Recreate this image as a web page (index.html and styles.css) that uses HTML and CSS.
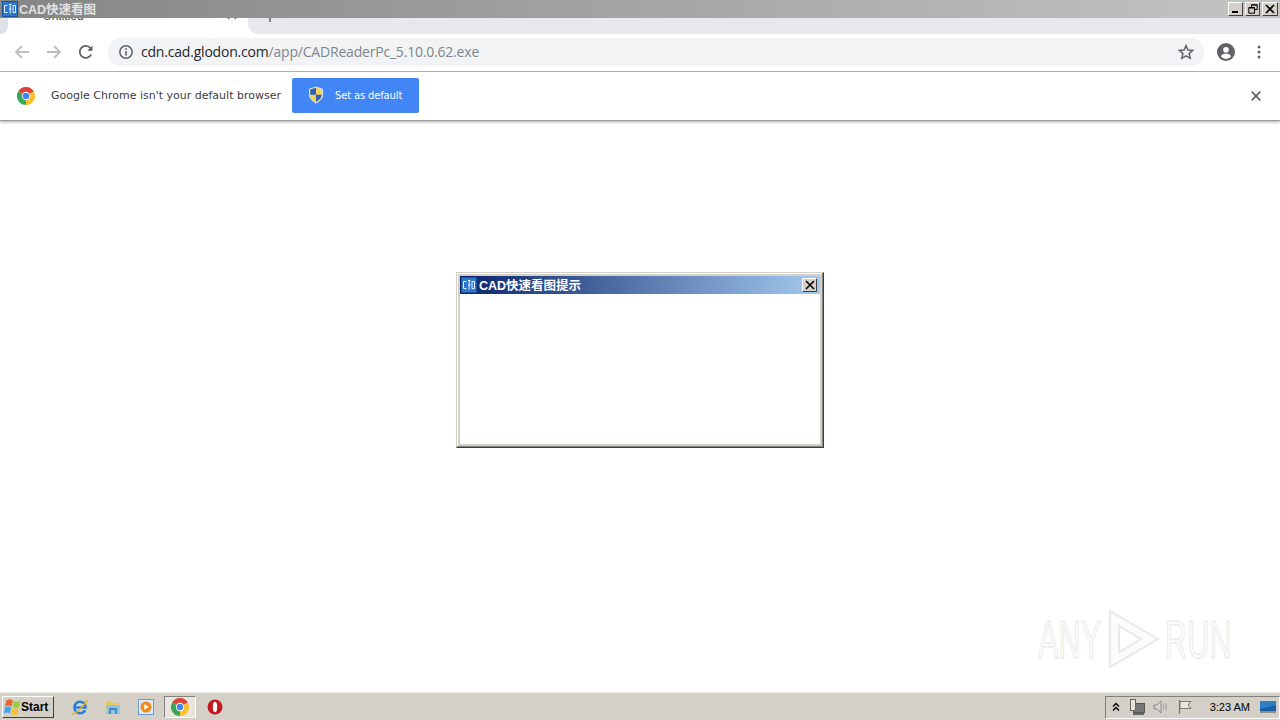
FILE: index.html
```html
<!DOCTYPE html>
<html lang="en">
<head>
    <meta charset="UTF-8">
    <meta name="viewport" content="width=device-width, initial-scale=1.0">
    <title>CAD快速看图</title>
    <link rel="stylesheet" href="styles.css">
</head>
<body>
    <div class="screen">
        <div class="titlebar">
            <div class="app-icon">
                <svg width="16" height="16" viewBox="0 0 16 16"><rect width="16" height="16" fill="#1c4f9c"/><rect x="1" y="1" width="14" height="14" fill="#2f78c8"/><path d="M2.500 4.500h3M2.500 4.500v7h3M7 3.500h2.500M8.200 3.500v9M7 8h2.500M11 4.500h2.500v7H11z" stroke="#e4f1ff" stroke-width="1" fill="none"/></svg>
            </div>
            <span class="titlebar-text">CAD快速看图</span>
            <div class="win-buttons">
                <button class="win-btn"><svg width="10" height="10" viewBox="0 0 10 10"><rect x="1" y="7" width="6" height="2" fill="#000"/></svg></button>
                <button class="win-btn"><svg width="10" height="10" viewBox="0 0 10 10"><path d="M3.500 3V.8h5.700v4.700H7M.8 3.500h5.700v5.700H.8z" fill="none" stroke="#000"/><path d="M3 1h6M1 4h5" stroke="#000"/></svg></button>
                <button class="win-btn"><svg width="10" height="10" viewBox="0 0 10 10"><path d="M1 1l8 8M9 1l-8 8" stroke="#000" stroke-width="1.600"/></svg></button>
            </div>
        </div>

        <div class="tabstrip">
            <div class="strip-left"></div>
            <div class="tab">
                <span class="tab-title">Untitled</span>
                <svg class="tab-close" width="10" height="10" viewBox="0 0 10 10"><path d="M1 1l8 8M9 1l-8 8" stroke="#5f6368" stroke-width="1.400"/></svg>
            </div>
            <div class="strip-right">
                <svg class="new-tab" width="12" height="12" viewBox="0 0 12 12"><path d="M6 0v12M0 6h12" stroke="#5f6368" stroke-width="1.500"/></svg>
            </div>
        </div>

        <div class="toolbar">
            <svg class="nav-icon" width="16" height="16" viewBox="0 0 16 16"><path d="M15 8H2M8 2L2 8l6 6" fill="none" stroke="#bcbec1" stroke-width="1.800"/></svg>
            <svg class="nav-icon" width="16" height="16" viewBox="0 0 16 16"><path d="M1 8h13M8 2l6 6-6 6" fill="none" stroke="#bcbec1" stroke-width="1.800"/></svg>
            <svg class="nav-icon" width="16" height="16" viewBox="0 0 16 16"><path d="M13.200 10.500A6 6 0 1 1 12.400 4" fill="none" stroke="#5f6368" stroke-width="1.800"/><path d="M14.500 1.500v5.200H9.300z" fill="#5f6368"/></svg>
            <div class="omnibox">
                <svg class="info-icon" width="16" height="16" viewBox="0 0 16 16"><circle cx="8" cy="8" r="6.200" fill="none" stroke="#5f6368" stroke-width="1.500"/><path d="M8 7v4.400" stroke="#5f6368" stroke-width="1.600"/><rect x="7.200" y="4.200" width="1.600" height="1.600" fill="#5f6368"/></svg>
                <span class="url"><span class="url-host">cdn.cad.glodon.com</span><span class="url-path">/app/CADReaderPc_5.10.0.62.exe</span></span>
                <svg class="star-icon" width="16" height="16" viewBox="0 0 16 16"><path d="M8 1.600l1.900 4.400 4.800.4-3.600 3.200 1.100 4.700L8 11.800l-4.200 2.500 1.100-4.700-3.600-3.200 4.800-.4z" fill="none" stroke="#5f6368" stroke-width="1.500"/></svg>
            </div>
            <svg class="profile-icon" width="18" height="18" viewBox="0 0 18 18"><circle cx="9" cy="9" r="9" fill="#5f6368"/><circle cx="9" cy="6.800" r="2.800" fill="#fff"/><path d="M3.800 13.200c1.200-2 3.200-2.700 5.200-2.700s4 .7 5.200 2.700A6.600 6.600 0 0 1 9 16a6.600 6.600 0 0 1-5.200-2.800z" fill="#fff"/></svg>
            <svg class="menu-icon" width="4" height="14" viewBox="0 0 4 14"><circle cx="2" cy="2" r="1.500" fill="#5f6368"/><circle cx="2" cy="7" r="1.500" fill="#5f6368"/><circle cx="2" cy="12" r="1.500" fill="#5f6368"/></svg>
        </div>

        <div class="infobar">
            <svg class="chrome-logo" width="18" height="18" viewBox="0 0 18 18">
                <path d="M9 9L1.200 4.500A9 9 0 0 1 16.800 4.500z" fill="#db4437"/>
                <path d="M9 9L16.800 4.500A9 9 0 0 1 9 18z" fill="#fbc02d"/>
                <path d="M9 9L9 18A9 9 0 0 1 1.200 4.500z" fill="#3aa757"/>
                <circle cx="9" cy="9" r="4.200" fill="#fff"/>
                <circle cx="9" cy="9" r="3.300" fill="#4285f4"/>
            </svg>
            <span class="infobar-text">Google Chrome isn't your default browser</span>
            <button class="default-btn">
                <svg width="16" height="18" viewBox="0 0 16 18"><path d="M8 1l6.500 2.200v5.300c0 4-3 6.800-6.500 8.500-3.500-1.700-6.500-4.500-6.500-8.500V3.200z" fill="#f3d25a" stroke="#dfe7f5" stroke-width="1"/><path d="M8 1.800v7H2.200V3.600zM8 8.800h5.800c-.3 3.300-2.900 5.600-5.800 7.200z" fill="#2f62b8"/></svg>
                <span>Set as default</span>
            </button>
            <svg class="infobar-close" width="10" height="10" viewBox="0 0 10 10"><path d="M.7.700l8.600 8.600M9.300.700L.7 9.300" stroke="#5f6368" stroke-width="1.700"/></svg>
        </div>

        <div class="content"></div>

        <div class="taskbar">
            <button class="start-btn">
                <svg width="17" height="18" viewBox="0 0 17 18"><path d="M2.500 2.500C4.500 1 6.500 1 8.800 2.300L7.500 8.500C5.500 7.300 3.500 7.300 1 8.500z" fill="#e8632c"/><path d="M9.800 2.800C12 4 14 4 16.500 2.800L15 9.300C13 10.300 10.800 10.300 8.500 9z" fill="#9ccc3c"/><path d="M.8 9.500C3 8.300 5 8.300 7.200 9.500L6 15.500C4 14.300 2 14.300 0 15.500z" fill="#3fa4e8"/><path d="M8.300 10C10.500 11.200 12.700 11.200 14.800 10.300L13.500 16.300C11.500 17.300 9.300 17.300 7 16z" fill="#fbc02d"/></svg>
                <span>Start</span>
            </button>
            <div class="quick-launch">
                <svg class="tray-app" width="18" height="18" viewBox="0 0 18 18"><path d="M3.500 9.500h11C14.500 6 12.300 3.800 9 3.800S3.500 6 3.500 9.500c0 3.600 2.300 5.700 5.500 5.700 2.500 0 4.200-1 5.100-3" fill="none" stroke="#2b7fd6" stroke-width="2.600"/><path d="M1 16C4 16.500 13 8 16.500 2" fill="none" stroke="#e6b422" stroke-width="1.500"/></svg>
                <svg class="tray-app" width="18" height="18" viewBox="0 0 18 18"><path d="M2 3h6l1 2h7v11H2z" fill="#e8c860"/><rect x="2.500" y="7" width="13" height="9" fill="#8cc4e6"/><path d="M6 16v-5h6v5" fill="none" stroke="#3f86b8" stroke-width="1.800"/></svg>
                <svg class="tray-app" width="18" height="18" viewBox="0 0 18 18"><rect x="1.500" y="1.500" width="15" height="15" fill="#dce9f7" stroke="#6b9bd1"/><circle cx="9" cy="9" r="5.500" fill="#ef8a1d"/><path d="M7.300 6l4.400 3-4.400 3z" fill="#fff"/></svg>
                <button class="task-btn">
                    <svg width="18" height="18" viewBox="0 0 18 18">
                        <path d="M9 9L1.200 4.500A9 9 0 0 1 16.800 4.500z" fill="#db4437"/>
                        <path d="M9 9L16.800 4.500A9 9 0 0 1 9 18z" fill="#fbc02d"/>
                        <path d="M9 9L9 18A9 9 0 0 1 1.200 4.500z" fill="#3aa757"/>
                        <circle cx="9" cy="9" r="4.200" fill="#fff"/>
                        <circle cx="9" cy="9" r="3.300" fill="#4285f4"/>
                    </svg>
                </button>
                <svg class="tray-app" width="16" height="16" viewBox="0 0 16 16"><circle cx="8" cy="8" r="7.500" fill="#c4161c"/><ellipse cx="8" cy="8" rx="2.200" ry="5.200" fill="#fff"/></svg>
            </div>
            <div class="tray">
                <svg class="tray-chevron" width="8" height="10" viewBox="0 0 8 10"><path d="M1 4.500l3-3 3 3M1 8.500l3-3 3 3" fill="none" stroke="#000" stroke-width="1.400"/></svg>
                <svg width="16" height="16" viewBox="0 0 16 16"><rect x="4.500" y="4.500" width="11" height="9" fill="#777" stroke="#555"/><rect x="1.500" y=".5" width="5" height="11" fill="#e6e2d6" stroke="#666"/><path d="M4 15h11" stroke="#666" stroke-width="2"/></svg>
                <svg width="16" height="16" viewBox="0 0 16 16"><path d="M1 6h3l4-4v12l-4-4H1z" fill="#d8d4cb" stroke="#8a8a8a"/><path d="M10 5.500c1 1.500 1 3.500 0 5M12 4c1.800 2.500 1.800 5.500 0 8" fill="none" stroke="#9a9a9a"/></svg>
                <svg width="16" height="16" viewBox="0 0 16 16"><path d="M2.500 1v14" stroke="#777" stroke-width="1.300"/><path d="M3 2.500h11l-3 3.500 3 3.500H3z" fill="#e9e5da" stroke="#777"/></svg>
                <span class="clock">3:23 AM</span>
                <svg class="show-desktop" width="16" height="12" viewBox="0 0 16 12"><rect width="16" height="10" fill="#2e7ec9"/><path d="M0 8l16-4v6H0z" fill="#1b5ea3"/><rect y="10" width="16" height="2" fill="#8e8e8e"/></svg>
            </div>
        </div>

        <div class="dialog">
            <div class="dialog-title">
                <svg width="16" height="16" viewBox="0 0 16 16"><rect width="16" height="16" fill="#1c4f9c"/><rect x="1" y="1" width="14" height="14" fill="#2f78c8"/><path d="M2.500 4.500h3M2.500 4.500v7h3M7 3.500h2.500M8.200 3.500v9M7 8h2.500M11 4.500h2.500v7H11z" stroke="#e4f1ff" stroke-width="1" fill="none"/></svg>
                <span class="dialog-title-text">CAD快速看图提示</span>
                <button class="win-btn dialog-close"><svg width="10" height="10" viewBox="0 0 10 10"><path d="M1 1l8 8M9 1l-8 8" stroke="#000" stroke-width="1.600"/></svg></button>
            </div>
        </div>

        <div class="watermark">
            <span class="wm-word">ANY</span>
            <svg width="56" height="62" viewBox="0 0 56 62"><path d="M4 3l48 28L4 59zM13 18l22 13-22 13z" fill="#fbfbfb" fill-rule="evenodd" stroke="#e9e9e9" stroke-width="2"/></svg>
            <span class="wm-word">RUN</span>
        </div>
    </div>
</body>
</html>
```

FILE: styles.css
```css
* {
    margin: 0;
    padding: 0;
    box-sizing: border-box;
}

html,
body {
    height: 100%;
    overflow: hidden;
}

body {
    font-family: 'Liberation Sans', Arial, sans-serif;
    background: #fff;
}

.screen {
    position: relative;
    display: flex;
    flex-direction: column;
    width: 1280px;
    height: 720px;
}

/* Window title bar */
.titlebar {
    position: relative;
    z-index: 2;
    display: flex;
    align-items: center;
    flex: 0 0 18px;
    height: 18px;
    padding: 0 2px;
    background: linear-gradient(90deg, #858585 0%, #c4c4c4 100%);
}

.app-icon {
    display: flex;
    width: 16px;
}

.titlebar-text {
    margin: -2px 0 0 1px;
    color: #e2e2e2;
    font-family: 'Liberation Sans', 'Noto Sans CJK SC', sans-serif;
    font-size: 12.5px;
    font-weight: bold;
}

.win-buttons {
    display: flex;
    gap: 2px;
    margin-left: auto;
}

.win-btn {
    display: flex;
    align-items: center;
    justify-content: center;
    width: 15px;
    height: 14px;
    border: 1px solid;
    border-color: #fff #404040 #404040 #fff;
    background: #d4d0c8;
}

.win-buttons .win-btn:last-child {
    width: 16px;
}

/* Tabs */
.tabstrip {
    display: flex;
    flex: 0 0 16px;
    background: #fff;
}

.strip-left {
    flex: 0 0 8px;
    background: #dee1e6;
    border-bottom-right-radius: 8px;
}

.tab {
    display: flex;
    flex: 0 0 240px;
    height: 16px;
}

.tab-title {
    margin: -9px 0 0 35px;
    color: #45474a;
    font-size: 12px;
    line-height: 14px;
}

.tab-close {
    margin: -8px 11px 0 auto;
}

.strip-right {
    flex: 1;
    background: #e6e8ec;
    border-bottom-left-radius: 10px;
}

.new-tab {
    display: block;
    margin: -8px 0 0 16px;
}

/* Toolbar */
.toolbar {
    display: flex;
    align-items: center;
    flex: 0 0 38px;
    padding: 0 19px 2px 14px;
    background: #fff;
    border-bottom: 1px solid #b9babb;
}

.nav-icon {
    margin-right: 16px;
}

.omnibox {
    display: flex;
    align-items: center;
    flex: 1;
    height: 28px;
    margin: 0 13px 0 -2px;
    padding: 0 10px;
    background: #f1f3f4;
    border-radius: 14px;
}

.url {
    margin-left: 7px;
    font-family: 'Open Sans', sans-serif;
    font-size: 14px;
    letter-spacing: -0.2px;
}

.url-host {
    color: #24272b;
}

.url-path {
    color: #80868b;
}

.star-icon {
    margin-left: auto;
}

.profile-icon {
    margin-right: 22px;
}

/* Default browser bar */
.infobar {
    position: relative;
    z-index: 1;
    display: flex;
    align-items: center;
    flex: 0 0 49px;
    padding: 0 19px 2px 17px;
    background: #fff;
    border-bottom: 1px solid #9c9c9c;
    box-shadow: 0 1px 3px rgba(0, 0, 0, 0.35);
}

.chrome-logo {
    margin-top: 2px;
}

.infobar-text {
    margin-left: 16px;
    color: #3c4043;
    font-family: 'DejaVu Sans', sans-serif;
    font-size: 11px;
}

.default-btn {
    display: flex;
    align-items: center;
    gap: 11px;
    width: 127px;
    height: 35px;
    margin-left: 11px;
    padding-left: 16px;
    border: none;
    border-radius: 2px;
    background: #4285f4;
    color: #fff;
    font-family: 'DejaVu Sans', sans-serif;
    font-size: 10px;
    letter-spacing: -0.15px;
}

.infobar-close {
    margin: 2px 0 0 auto;
}

.content {
    flex: 1;
    background: #fff;
}

/* Taskbar */
.taskbar {
    display: flex;
    align-items: center;
    flex: 0 0 28px;
    padding: 1px 0 0 2px;
    background: #d4d0c8;
    border-top: 1px solid #f1efe9;
}

.start-btn {
    display: flex;
    align-items: center;
    width: 52px;
    height: 22px;
    padding-left: 1px;
    border: 1px solid;
    border-color: #fff #404040 #404040 #fff;
    background: #d4d0c8;
    color: #000;
    font-family: 'Liberation Sans', sans-serif;
    font-size: 12px;
    font-weight: bold;
}

.quick-launch {
    display: flex;
    align-items: center;
    gap: 15px;
    margin-left: 17px;
}

.task-btn {
    display: flex;
    align-items: center;
    justify-content: center;
    width: 32px;
    height: 22px;
    margin: 0 -4px 0 -6px;
    border: 1px solid;
    border-color: #808080 #fff #fff #808080;
    background: #e8e5de;
}

.tray {
    display: flex;
    align-items: center;
    gap: 8px;
    height: 23px;
    margin-left: auto;
    padding: 0 3px 0 6px;
    border: 1px solid;
    border-color: #808080 #fff #fff #808080;
}

.tray-chevron {
    margin-right: 1px;
}

.clock {
    margin-left: 9px;
    color: #000;
    font-family: 'Liberation Sans', sans-serif;
    font-size: 11px;
}

.show-desktop {
    margin-left: 2px;
}

/* Floating dialog window */
.dialog {
    position: absolute;
    left: 456px;
    top: 272px;
    width: 368px;
    height: 176px;
    padding: 3px;
    background: #fff;
    border: 1px solid;
    border-color: #d4d0c8 #404040 #404040 #d4d0c8;
    box-shadow: inset -1px -1px 0 #808080, inset 1px 1px 0 #fff, inset -3px -3px 0 #d4d0c8, inset 3px 3px 0 #d4d0c8;
}

.dialog-title {
    display: flex;
    align-items: center;
    height: 18px;
    padding: 0 3px 0 1px;
    background: linear-gradient(90deg, #0a246a 0%, #a6caf0 100%);
}

.dialog-title-text {
    margin: -2px 0 0 2px;
    color: #fff;
    font-family: 'Liberation Sans', 'Noto Sans CJK SC', sans-serif;
    font-size: 12.5px;
    font-weight: bold;
}

.dialog-close {
    margin-left: auto;
}

/* Watermark */
.watermark {
    position: absolute;
    left: 1038px;
    top: 608px;
    display: flex;
    align-items: center;
    gap: 3px;
}

.wm-word {
    width: 65px;
    color: #fbfbfb;
    font-family: 'Liberation Sans', sans-serif;
    font-size: 54px;
    white-space: nowrap;
    transform: scaleX(0.57);
    transform-origin: left center;
    -webkit-text-stroke: 1px #e6e6e6;
}
```
